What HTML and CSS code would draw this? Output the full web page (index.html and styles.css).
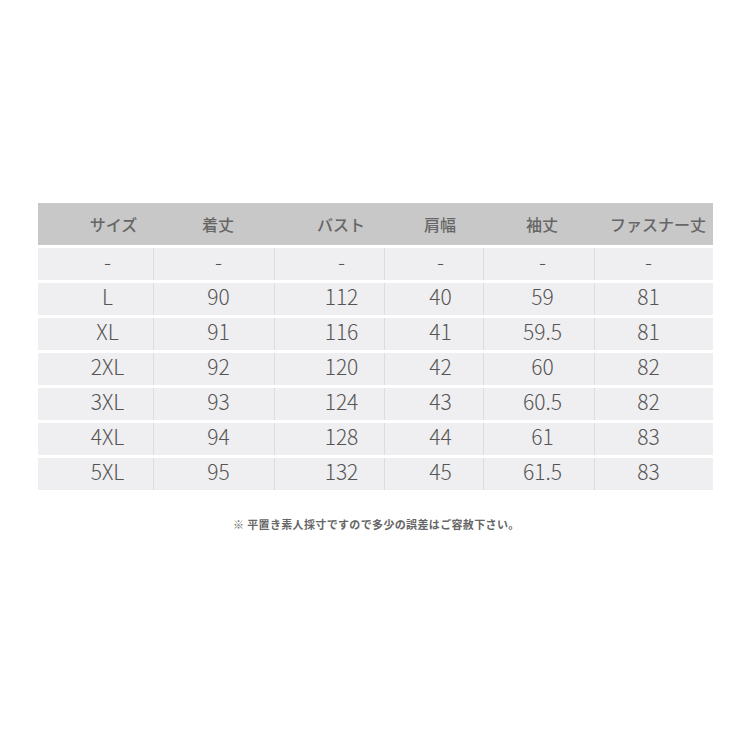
FILE: index.html
```html
<!DOCTYPE html>
<html lang="ja">
<head>
<meta charset="utf-8">
<link rel="stylesheet" href="styles.css">
</head>
<body>
<div class="page">
  <div class="table">
    <div class="row head">
      <div class="c">サイズ</div><div class="c">着丈</div><div class="c">バスト</div><div class="c">肩幅</div><div class="c">袖丈</div><div class="c">ファスナー丈</div>
    </div>
    <div class="row"><div class="c">-</div><div class="c">-</div><div class="c">-</div><div class="c">-</div><div class="c">-</div><div class="c">-</div></div>
    <div class="row"><div class="c">L</div><div class="c">90</div><div class="c">112</div><div class="c">40</div><div class="c">59</div><div class="c">81</div></div>
    <div class="row"><div class="c">XL</div><div class="c">91</div><div class="c">116</div><div class="c">41</div><div class="c">59.5</div><div class="c">81</div></div>
    <div class="row"><div class="c">2XL</div><div class="c">92</div><div class="c">120</div><div class="c">42</div><div class="c">60</div><div class="c">82</div></div>
    <div class="row"><div class="c">3XL</div><div class="c">93</div><div class="c">124</div><div class="c">43</div><div class="c">60.5</div><div class="c">82</div></div>
    <div class="row"><div class="c">4XL</div><div class="c">94</div><div class="c">128</div><div class="c">44</div><div class="c">61</div><div class="c">83</div></div>
    <div class="row"><div class="c">5XL</div><div class="c">95</div><div class="c">132</div><div class="c">45</div><div class="c">61.5</div><div class="c">83</div></div>
  </div>
  <p class="note">※ 平置き素人採寸ですので多少の誤差はご容赦下さい。</p>
</div>
</body>
</html>
```
FILE: styles.css
```css
html, body { margin: 0; padding: 0; background: #fff; }
body { width: 750px; height: 750px; font-family: "Noto Sans CJK JP", "Noto Sans", sans-serif; }
.page { padding: 203px 0 0 38px; }
.table { width: 675px; display: flex; flex-direction: column; gap: 3px; }
.row {
  display: grid;
  grid-template-columns: 115px 121px 110px 99px 111px 119px;
  height: 32px;
  background: #efeef0;
  color: #555;
  font-weight: 300;
  font-size: 21px;
  line-height: 27px;
}
.row .c { text-align: center; border-left: 1px solid #dcdbdd; }
.row .c:first-child { border-left: none; padding-left: 24px; }
.row .c:nth-child(2) { padding-left: 9px; }
.row .c:nth-child(3) { padding-left: 24px; }
.row .c:nth-child(4) { padding-left: 13px; }
.row .c:nth-child(5) { padding-left: 7px; }
.row .c:nth-child(6) { padding-right: 11px; }
.row.head {
  height: 42px;
  line-height: 42px;
  background: #c8c8c8;
  color: #666;
  font-weight: 500;
  font-size: 16px;
}
.row.head .c { border-left: none; }
.row.head .c:first-child { padding-left: 36px; }
.row.head .c:nth-child(6) { padding-right: 0; padding-left: 9px; white-space: nowrap; }
.note {
  margin: 26px 0 0 195px;
  font-size: 11px;
  font-weight: 700;
  color: #666;
  letter-spacing: 0.35px;
}
```
